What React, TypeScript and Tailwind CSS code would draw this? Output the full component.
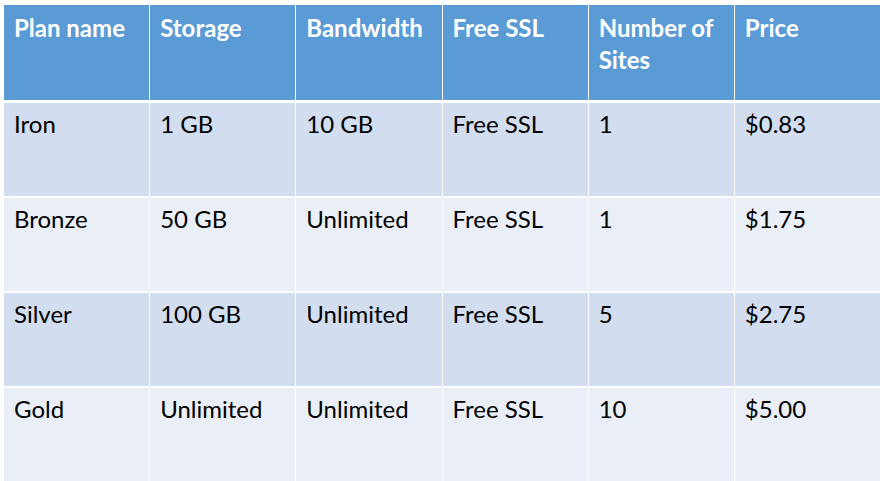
const headers = ['Plan name', 'Storage', 'Bandwidth', 'Free SSL', 'Number of Sites', 'Price'];

const rows = [
  ['Iron', '1 GB', '10 GB', 'Free SSL', '1', '$0.83'],
  ['Bronze', '50 GB', 'Unlimited', 'Free SSL', '1', '$1.75'],
  ['Silver', '100 GB', 'Unlimited', 'Free SSL', '5', '$2.75'],
  ['Gold', 'Unlimited', 'Unlimited', 'Free SSL', '10', '$5.00'],
];

export default function App() {
  return (
    <div className="w-[880px] h-[481px] bg-white pl-[4px] pt-[5px] overflow-hidden font-['Lato','Liberation_Sans',sans-serif] text-[24px] leading-[32px]">
      <div className="grid grid-cols-6 gap-x-[1px] h-[95px] mb-[3px]">
        {headers.map((h) => (
          <div key={h} className="bg-[#5b9bd5] text-white font-bold pl-[10px] pr-[6px] pt-[7px]">
            {h}
          </div>
        ))}
      </div>
      <div className="flex flex-col gap-[2px]">
        {rows.map((row, i) => (
          <div key={row[0]} className="grid grid-cols-6 gap-x-[1px] h-[93px]">
            {row.map((cell, j) => (
              <div
                key={j}
                className={`${i % 2 === 0 ? 'bg-[#d2deef]' : 'bg-[#eaeff7]'} text-black pl-[10px] pt-[5px]`}
              >
                {cell}
              </div>
            ))}
          </div>
        ))}
      </div>
    </div>
  );
}
